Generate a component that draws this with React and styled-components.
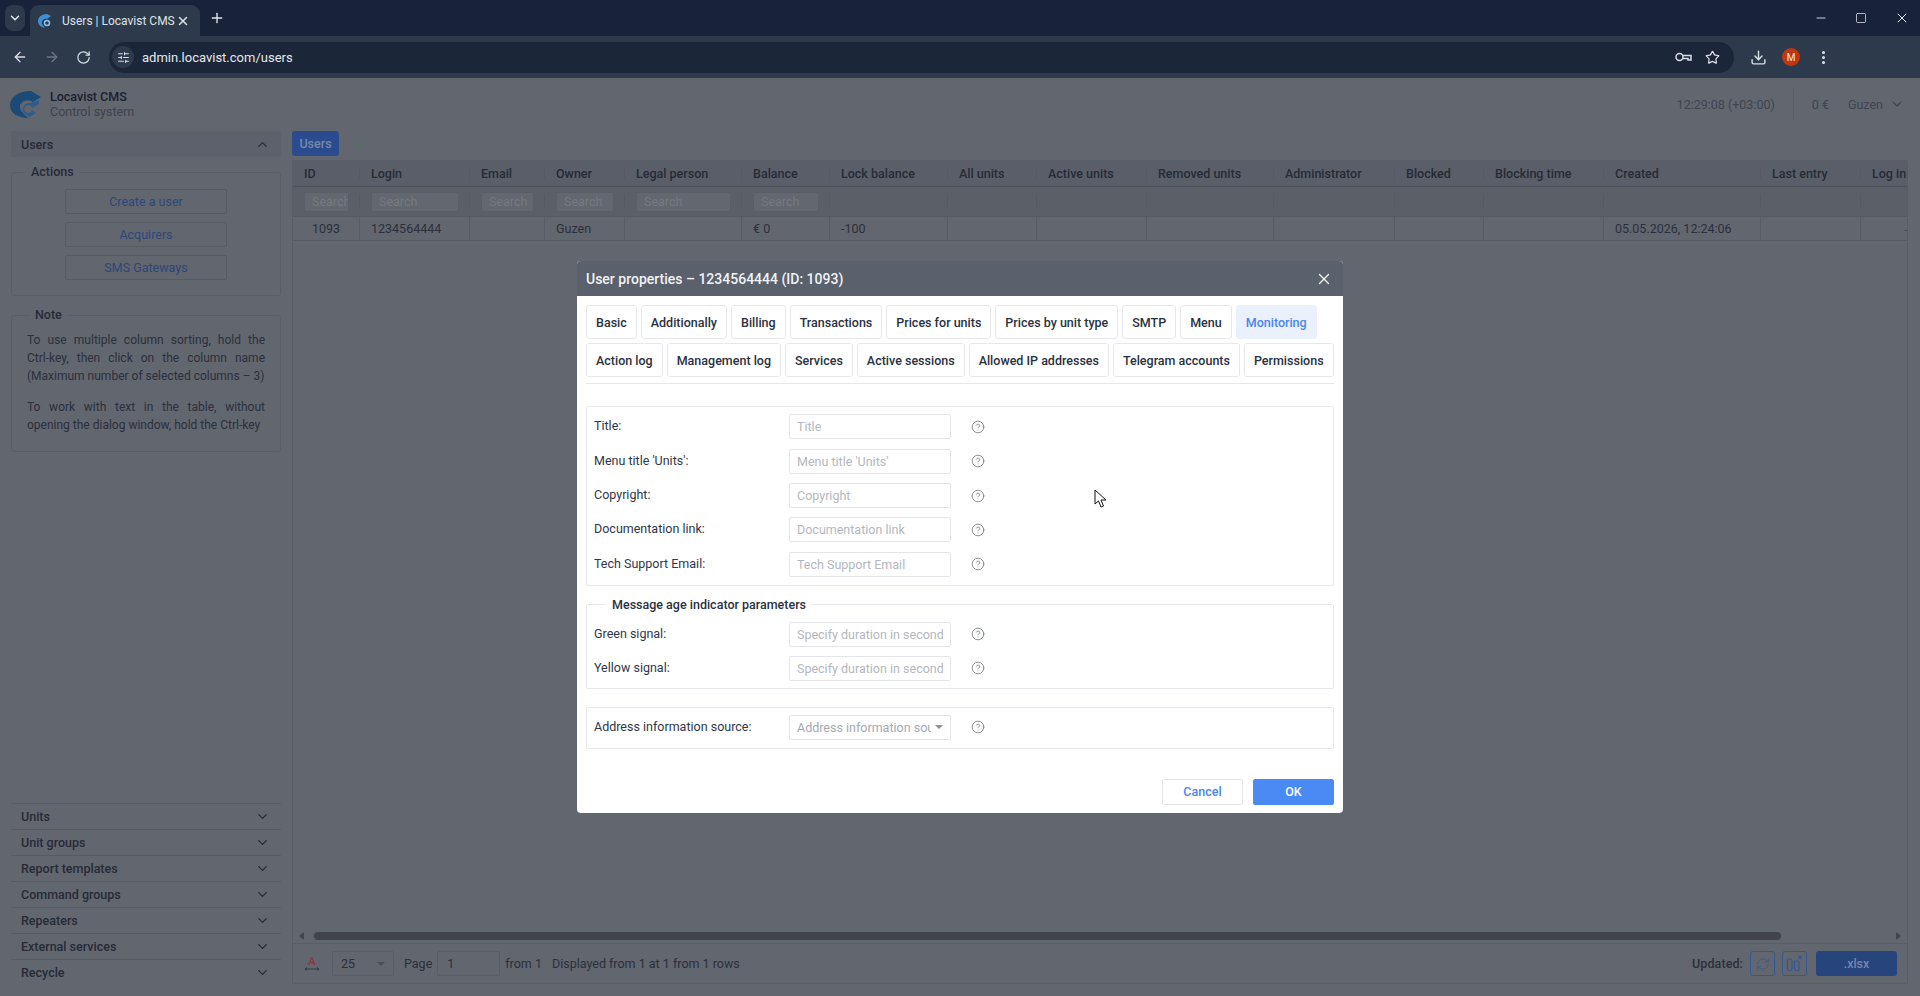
import styled, { createGlobalStyle } from "styled-components";
import {
  ArrowLeft,
  ArrowRight,
  ChevronDown,
  ChevronUp,
  CircleHelp,
  Download,
  EllipsisVertical,
  Minus,
  Plus,
  RefreshCw,
  RotateCw,
  SlidersHorizontal,
  Square,
  Star,
  X,
} from "lucide-react";

const GlobalStyle = createGlobalStyle`
  html, body {
    margin: 0;
    padding: 0;
    height: 996px;
    overflow: hidden;
    background: #62666f;
    font-family: Roboto, "Liberation Sans", sans-serif;
    font-size: 13px;
  }
  * { box-sizing: border-box; }
`;

const Window = styled.div`
  position: relative;
  display: flex;
  flex-direction: column;
  width: 1920px;
  height: 996px;
  overflow: hidden;
`;

/* browser chrome */
const TabStrip = styled.div`
  display: flex;
  align-items: flex-end;
  height: 36px;
  padding-left: 5px;
  background: #18233a;
  color: #e4e8ee;
`;
const TabSearch = styled.div`
  display: flex;
  align-items: center;
  justify-content: center;
  width: 20px;
  height: 26px;
  margin: 0 5px 5px 0;
  border-radius: 8px;
  background: #2d3a4c;
`;
const BrowserTab = styled.div`
  display: flex;
  align-items: center;
  width: 170px;
  height: 31px;
  padding: 0 10px 0 7px;
  border-radius: 9px 9px 0 0;
  background: #2d3a4c;
  font-size: 12px;
  color: #dde2e9;
`;
const TabTitle = styled.span`
  flex: 1;
  margin-left: 9px;
`;
const NewTab = styled.div`
  display: flex;
  align-items: center;
  margin: 0 0 9px 9px;
  height: 18px;
`;
const WindowControls = styled.div`
  display: flex;
  align-items: center;
  gap: 27px;
  margin-left: auto;
  height: 36px;
  padding-right: 10px;
`;
const Toolbar = styled.div`
  display: flex;
  align-items: center;
  height: 42px;
  padding: 0 10px 0 12px;
  background: #2d3a4c;
  color: #d8dde5;
`;
const NavIcons = styled.div`
  display: flex;
  align-items: center;
  gap: 16px;
  width: 98px;
`;
const AddressBar = styled.div`
  display: flex;
  align-items: center;
  width: 1625px;
  height: 31px;
  margin-left: -1px;
  padding: 0 14px 0 3px;
  border-radius: 16px;
  background: #1b2638;
`;
const SiteInfo = styled.div`
  display: flex;
  align-items: center;
  justify-content: center;
  width: 22px;
  height: 22px;
  border-radius: 50%;
  background: #2d3a4c;
`;
const Url = styled.span`
  flex: 1;
  margin-left: 8px;
  font-size: 13px;
  color: #e4e8ee;
`;
const AddressIcons = styled.div`
  display: flex;
  align-items: center;
  gap: 13px;
`;
const ToolIcons = styled.div`
  display: flex;
  align-items: center;
  gap: 15px;
  margin-left: 16px;
`;
const Avatar = styled.div`
  display: flex;
  align-items: center;
  justify-content: center;
  width: 18px;
  height: 18px;
  border-radius: 50%;
  background: #c2360f;
  color: #f4e6e0;
  font-size: 10px;
`;

/* dimmed page */
const Page = styled.div`
  display: flex;
  flex-direction: column;
  flex: 1;
  min-height: 0;
  background: #62666f;
  color: #2b303c;
`;
const Header = styled.div`
  display: flex;
  align-items: center;
  height: 52px;
  padding: 0 15px 0 10px;
`;
const Brand = styled.div`
  display: flex;
  flex-direction: column;
  margin-left: 9px;
  line-height: 15px;
`;
const BrandName = styled.span`
  font-size: 12.5px;
  font-weight: 500;
  color: #1c2030;
`;
const BrandSub = styled.span`
  font-size: 12.5px;
  color: #3d424e;
`;
const HeaderRight = styled.div`
  display: flex;
  align-items: center;
  margin-left: auto;
  font-size: 12.5px;
  color: #3f4551;
`;
const Clock = styled.span`
  padding-right: 18px;
`;
const HeaderDivider = styled.div`
  width: 1px;
  height: 31px;
  background: #5a5e68;
`;
const Balance = styled.span`
  margin: 0 19px 0 18px;
`;

const Content = styled.div`
  display: flex;
  flex: 1;
  min-height: 0;
  padding: 1px 12px 0 11px;
`;
const Sidebar = styled.div`
  display: flex;
  flex-direction: column;
  width: 270px;
  padding-bottom: 11px;
`;
const SectionHead = styled.div`
  display: flex;
  align-items: center;
  justify-content: space-between;
  height: 26px;
  padding: 0 11px 0 10px;
  background: #5d616b;
  font-weight: 500;
  font-size: 12.5px;
  color: #262b37;
`;
const Group = styled.fieldset`
  margin: ${(p) => p.$top}px 0 0;
  padding: ${(p) => p.$pad};
  min-width: 0;
  border: 1px solid #5a5e68;
  border-radius: 3px;
  display: flex;
  flex-direction: column;
`;
const GroupTitle = styled.legend`
  margin-left: 3px;
  padding: 0 5px;
  line-height: 16px;
  font-size: 12.5px;
  font-weight: 500;
  color: #262b37;
`;
const ActionButton = styled.div`
  display: flex;
  align-items: center;
  justify-content: center;
  width: 162px;
  height: 25px;
  margin: 0 auto 8px;
  border: 1px solid #575b65;
  border-radius: 2px;
  font-size: 12.5px;
  color: #2d4679;
  &:last-child { margin-bottom: 0; }
`;
const NoteText = styled.p`
  margin: 0 0 13px;
  line-height: 18px;
  font-size: 12px;
  text-align: justify;
  color: #2c303c;
  &:last-child { margin-bottom: 0; }
`;
const Accordion = styled.div`
  margin-top: auto;
`;
const AccordionItem = styled.div`
  display: flex;
  align-items: center;
  justify-content: space-between;
  height: 26px;
  padding: 0 11px 0 10px;
  border-top: 1px solid #575b65;
  font-size: 12.5px;
  font-weight: 500;
  color: #262b37;
`;

const Main = styled.div`
  display: flex;
  flex-direction: column;
  flex: 1;
  margin-left: 11px;
  padding-bottom: 12px;
  min-width: 0;
`;
const ViewTabs = styled.div`
  display: flex;
  align-items: center;
  gap: 13px;
  height: 25px;
  margin-bottom: 4px;
`;
const ViewTab = styled.div`
  display: flex;
  align-items: center;
  justify-content: center;
  width: 47px;
  height: 25px;
  border-radius: 3px;
  background: #2c4b8e;
  color: #7488ac;
  font-size: 12.5px;
  font-weight: 500;
`;
const TablePanel = styled.div`
  display: flex;
  flex-direction: column;
  flex: 1;
  border: 1px solid #595d67;
  border-radius: 2px;
  min-height: 0;
`;
const COLUMNS = "67px 110px 75px 80px 117px 88px 118px 89px 110px 127px 121px 89px 120px 157px 100px 46px";
const TableRow = styled.div`
  display: grid;
  grid-template-columns: ${COLUMNS};
  flex-shrink: 0;
  height: ${(p) => p.$height}px;
  background: ${(p) => p.$bg || "transparent"};
  border-bottom: 1px solid ${(p) => p.$line || "#565a64"};
`;
const HeadCell = styled.div`
  position: relative;
  display: flex;
  align-items: center;
  padding-left: 11px;
  font-size: 12.5px;
  font-weight: 500;
  color: #262b37;
  white-space: nowrap;
  overflow: hidden;
  &:not(:last-child)::after {
    content: "";
    position: absolute;
    right: 0;
    top: 7px;
    bottom: 6px;
    width: 1px;
    background: #565a64;
  }
`;
const SearchCell = styled(HeadCell)`
  padding: 0 11px;
  &:not(:last-child)::after { top: 7px; bottom: 7px; }
`;
const SearchInput = styled.div`
  display: flex;
  align-items: center;
  width: 100%;
  height: 20px;
  padding-left: 7px;
  background: #63676f;
  border: 1px solid #5a5e68;
  border-radius: 2px;
  color: #757982;
  font-size: 12.5px;
  font-weight: 400;
  overflow: hidden;
`;
const DataCell = styled.div`
  display: flex;
  align-items: center;
  justify-content: ${(p) => (p.$center ? "center" : "flex-start")};
  padding-left: ${(p) => (p.$center ? 0 : 11)}px;
  border-right: 1px solid #575b65;
  font-size: 12.5px;
  color: #2b303c;
  white-space: nowrap;
  overflow: hidden;
  &:last-child { border-right: 0; }
`;
const TableFill = styled.div`
  flex: 1;
`;
const ScrollRow = styled.div`
  display: flex;
  align-items: center;
  height: 16px;
  padding: 0 6px;
  border-bottom: 1px solid #595d67;
`;
const ScrollTrack = styled.div`
  flex: 1;
  padding: 0 115px 0 10px;
`;
const ScrollThumb = styled.div`
  height: 8px;
  border-radius: 4px;
  background: #41444d;
`;
const Arrow = styled.div`
  width: 0;
  height: 0;
  border-top: 4px solid transparent;
  border-bottom: 4px solid transparent;
  ${(p) => (p.$right ? "border-left: 5px solid #41444d;" : "border-right: 5px solid #41444d;")}
`;
const Footer = styled.div`
  display: flex;
  align-items: center;
  flex: 0 0 39px;
  padding: 0 10px 0 10px;
  font-size: 12.5px;
  color: #2b303c;
`;
const PageSize = styled.div`
  display: flex;
  align-items: center;
  justify-content: space-between;
  width: 62px;
  height: 25px;
  margin: 0 10px 0 11px;
  padding: 0 8px;
  border: 1px solid #595d67;
  border-radius: 2px;
`;
const Caret = styled.div`
  width: 0;
  height: 0;
  border-left: 4px solid transparent;
  border-right: 4px solid transparent;
  border-top: 4px solid ${(p) => p.$color || "#4a4e58"};
`;
const PageInput = styled.div`
  display: flex;
  align-items: center;
  width: 63px;
  height: 25px;
  margin: 0 5px 0 5px;
  padding-left: 9px;
  border: 1px solid #595d67;
  border-radius: 2px;
`;
const RowsInfo = styled.span`
  margin-left: 10px;
`;
const Updated = styled.span`
  margin: 0 7px 0 auto;
  font-weight: 500;
  letter-spacing: 0.1px;
`;
const OutlineButton = styled.div`
  display: flex;
  align-items: center;
  justify-content: center;
  width: 25px;
  height: 25px;
  margin-right: ${(p) => p.$gap}px;
  border: 1px solid #36568f;
  border-radius: 3px;
  color: #36568f;
`;
const ExportButton = styled.div`
  display: flex;
  align-items: center;
  justify-content: center;
  width: 81px;
  height: 25px;
  border-radius: 3px;
  background: #27447c;
  color: #7488ac;
  font-size: 12.5px;
  font-weight: 500;
`;

/* modal */
const Backdrop = styled.div`
  position: absolute;
  left: 0;
  right: 0;
  top: 78px;
  bottom: 0;
  display: flex;
  align-items: center;
  justify-content: center;
`;
const Modal = styled.div`
  width: 766px;
  border-radius: 4px;
  background: #fff;
  overflow: hidden;
  color: #333b4a;
`;
const ModalHead = styled.div`
  display: flex;
  align-items: center;
  justify-content: space-between;
  height: 35px;
  padding: 0 10px 0 9px;
  background: #5a606c;
  color: #f1f2f4;
  font-size: 14px;
  font-weight: 500;
`;
const ModalBody = styled.div`
  padding: 9px 9px 8px;
`;
const TabBar = styled.div`
  display: flex;
  flex-wrap: wrap;
  gap: 4px 4px;
  padding-bottom: 6px;
  border-bottom: 1px solid #e6e8eb;
`;
const PropTab = styled.div`
  display: flex;
  align-items: center;
  height: 34px;
  padding: 0 9px;
  border: 1px solid ${(p) => (p.$active ? "#eaf1fd" : "#e6e8eb")};
  border-radius: 3px;
  background: ${(p) => (p.$active ? "#eaf1fd" : "#fff")};
  color: ${(p) => (p.$active ? "#4a86f0" : "#2a3140")};
  font-size: 12.5px;
  font-weight: 500;
`;
const FormBox = styled.div`
  display: flex;
  flex-direction: column;
  gap: 9.3px;
  margin-top: 22px;
  padding: 7px 7px 8px;
  border: 1px solid #e6e8eb;
  border-radius: 2px;
`;
const FormGroup = styled.fieldset`
  display: flex;
  flex-direction: column;
  gap: 9px;
  min-width: 0;
  margin: 11px 0 0;
  padding: 9px 7px 7px;
  border: 1px solid #e6e8eb;
  border-radius: 2px;
`;
const FormLegend = styled.legend`
  margin-left: 12px;
  padding: 0 6px;
  line-height: 16px;
  font-size: 12.5px;
  font-weight: 500;
  color: #2a3140;
`;
const SingleBox = styled(FormBox)`
  margin-top: 18px;
`;
const FormRow = styled.div`
  display: flex;
  align-items: center;
  height: 25px;
`;
const FieldLabel = styled.label`
  width: 195px;
  margin-top: -2px;
  font-size: 12.5px;
  color: #2f3747;
`;
const FieldInput = styled.input`
  width: 162px;
  height: 25px;
  padding: 0 7px;
  border: 1px solid #e3e5e9;
  border-radius: 2px;
  font: 12.5px Roboto, sans-serif;
  outline: 0;
  &::placeholder { color: #b4b7bd; opacity: 1; }
`;
const FieldSelect = styled.div`
  display: flex;
  align-items: center;
  width: 162px;
  height: 25px;
  padding: 0 7px;
  border: 1px solid #e3e5e9;
  border-radius: 2px;
  font-size: 12.5px;
  color: #a6a9b0;
`;
const SelectText = styled.span`
  flex: 1;
  white-space: nowrap;
  overflow: hidden;
`;
const Help = styled.div`
  display: flex;
  margin-left: 20px;
  color: #6a7078;
`;
const ModalFooter = styled.div`
  display: flex;
  justify-content: flex-end;
  gap: 10px;
  margin-top: 30px;
`;
const ModalButton = styled.div`
  display: flex;
  align-items: center;
  justify-content: center;
  width: 81px;
  height: 26px;
  border: 1px solid ${(p) => (p.$primary ? "#4a8af5" : "#e3e5e9")};
  border-radius: 2px;
  background: ${(p) => (p.$primary ? "#4a8af5" : "#fff")};
  color: ${(p) => (p.$primary ? "#fff" : "#4a86f0")};
  font-size: 12.5px;
  font-weight: 500;
`;
const Cursor = styled.svg`
  position: absolute;
  left: 1094px;
  top: 489px;
`;

const columns = ["ID", "Login", "Email", "Owner", "Legal person", "Balance", "Lock balance", "All units", "Active units", "Removed units", "Administrator", "Blocked", "Blocking time", "Created", "Last entry", "Log in"];
const searchable = 6;
const row = { 0: "1093", 1: "1234564444", 3: "Guzen", 5: "€ 0", 6: "-100", 13: "05.05.2026, 12:24:06" };
const menuItems = ["Units", "Unit groups", "Report templates", "Command groups", "Repeaters", "External services", "Recycle"];
const propTabs = ["Basic", "Additionally", "Billing", "Transactions", "Prices for units", "Prices by unit type", "SMTP", "Menu", "Monitoring", "Action log", "Management log", "Services", "Active sessions", "Allowed IP addresses", "Telegram accounts", "Permissions"];
const mainFields = [
  ["Title:", "Title"],
  ["Menu title 'Units':", "Menu title 'Units'"],
  ["Copyright:", "Copyright"],
  ["Documentation link:", "Documentation link"],
  ["Tech Support Email:", "Tech Support Email"],
];
const signalFields = ["Green signal:", "Yellow signal:"];

const Logo = () => (
  <svg width="31" height="27" viewBox="0 0 31 27">
    <path d="M21 0 L31 6 L23 11 A9 9 0 0 0 10 14 A9 9 0 0 0 13 22 L18 27 C8 27 0 22 0 14 C0 6 9 0 21 0 Z" fill="#1c4a76" />
    <path d="M29 9 L29 13 L22 17 A4 4 0 1 0 22 19 L26 22 L19 26 L13 21 A7 7 0 0 1 21 12 Z" fill="#2c5d8c" />
  </svg>
);

const TabFavicon = () => (
  <svg width="16" height="16" viewBox="0 0 16 16">
    <path d="M10 1 L14 3 L10 6 A4 4 0 0 0 5 11 L8 15 C3 14 1 11 1 8 C1 4 5 1 10 1 Z" fill="#3d8fd8" />
    <circle cx="10" cy="10" r="2.5" fill="none" stroke="#8fc3ec" strokeWidth="1.5" />
  </svg>
);

const KeyIcon = () => (
  <svg width="17" height="12" viewBox="0 0 17 12" fill="none" stroke="currentColor" strokeWidth="1.5">
    <circle cx="4.5" cy="6" r="3.5" />
    <path d="M8 4.5 H16 V9 H13 V7.5 H8" />
  </svg>
);

const FitWidthIcon = () => (
  <svg width="18" height="18" viewBox="0 0 18 18">
    <text x="9" y="10" textAnchor="middle" fontSize="11" fontFamily="Roboto, sans-serif" fontWeight="500" fill="#8a3540">A</text>
    <path d="M2 14 H16 M2 14 L4 12.5 M2 14 L4 15.5 M16 14 L14 12.5 M16 14 L14 15.5" stroke="#30384a" strokeWidth="1" fill="none" />
  </svg>
);

const ColumnsIcon = () => (
  <svg width="17" height="17" viewBox="0 0 17 17" fill="none" stroke="currentColor" strokeWidth="1.2">
    <rect x="1.5" y="4" width="4.5" height="11.5" rx="1.5" />
    <rect x="8.5" y="6" width="4.5" height="9.5" rx="1.5" />
    <path d="M12.5 1 L15.5 4 M15.5 1 L12.5 4" />
  </svg>
);

const HelpIcon = () => (
  <Help>
    <CircleHelp size={14} strokeWidth={1.3} />
  </Help>
);

const App = () => {
  return (
    <Window>
      <GlobalStyle />
      <TabStrip>
        <TabSearch>
          <ChevronDown size={14} strokeWidth={2.5} />
        </TabSearch>
        <BrowserTab>
          <TabFavicon />
          <TabTitle>Users | Locavist CMS</TabTitle>
          <X size={14} strokeWidth={2.5} />
        </BrowserTab>
        <NewTab>
          <Plus size={16} strokeWidth={2} />
        </NewTab>
        <WindowControls>
          <Minus size={14} strokeWidth={1.5} />
          <Square size={12} strokeWidth={1.5} />
          <X size={16} strokeWidth={1.5} />
        </WindowControls>
      </TabStrip>
      <Toolbar>
        <NavIcons>
          <ArrowLeft size={16} strokeWidth={2} />
          <ArrowRight size={16} strokeWidth={2} color="#6c7685" />
          <RotateCw size={15} strokeWidth={2} />
        </NavIcons>
        <AddressBar>
          <SiteInfo>
            <SlidersHorizontal size={13} strokeWidth={2} />
          </SiteInfo>
          <Url>admin.locavist.com/users</Url>
          <AddressIcons>
            <KeyIcon />
            <Star size={15} strokeWidth={2} />
          </AddressIcons>
        </AddressBar>
        <ToolIcons>
          <Download size={17} strokeWidth={2} />
          <Avatar>M</Avatar>
          <EllipsisVertical size={17} strokeWidth={2.4} />
        </ToolIcons>
      </Toolbar>

      <Page>
        <Header>
          <Logo />
          <Brand>
            <BrandName>Locavist CMS</BrandName>
            <BrandSub>Control system</BrandSub>
          </Brand>
          <HeaderRight>
            <Clock>12:29:08 (+03:00)</Clock>
            <HeaderDivider />
            <Balance>0 €</Balance>
            Guzen
            <ChevronDown size={16} strokeWidth={1.6} style={{ marginLeft: 6 }} />
          </HeaderRight>
        </Header>

        <Content>
          <Sidebar>
            <SectionHead>
              Users
              <ChevronUp size={15} strokeWidth={2} />
            </SectionHead>
            <Group $top={7} $pad="9px 0 15px">
              <GroupTitle style={{ marginLeft: 14 }}>Actions</GroupTitle>
              <ActionButton>Create a user</ActionButton>
              <ActionButton>Acquirers</ActionButton>
              <ActionButton>SMS Gateways</ActionButton>
            </Group>
            <Group $top={11} $pad="8px 15px 17px">
              <GroupTitle>Note</GroupTitle>
              <NoteText>To use multiple column sorting, hold the Ctrl-key, then click on the column name (Maximum number of selected columns – 3)</NoteText>
              <NoteText>To work with text in the table, without opening the dialog window, hold the Ctrl-key</NoteText>
            </Group>
            <Accordion>
              {menuItems.map((item) => (
                <AccordionItem key={item}>
                  {item}
                  <ChevronDown size={15} strokeWidth={2} />
                </AccordionItem>
              ))}
            </Accordion>
          </Sidebar>

          <Main>
            <ViewTabs>
              <ViewTab>Users</ViewTab>
              <Plus size={15} strokeWidth={2} color="#2f8a3c" />
            </ViewTabs>
            <TablePanel>
              <TableRow $height={26} $bg="#5a5e68" $line="#4c505a">
                {columns.map((c) => (
                  <HeadCell key={c}>{c}</HeadCell>
                ))}
              </TableRow>
              <TableRow $height={30} $bg="#5b5f68">
                {columns.map((c, i) => (
                  <SearchCell key={c}>{i < searchable && <SearchInput>Search</SearchInput>}</SearchCell>
                ))}
              </TableRow>
              <TableRow $height={24}>
                {columns.map((c, i) => (
                  <DataCell key={c} $center={i === 0}>
                    {row[i]}
                    {i === columns.length - 1 && <span style={{ marginLeft: 30 }}>→</span>}
                  </DataCell>
                ))}
              </TableRow>
              <TableFill />
              <ScrollRow>
                <Arrow />
                <ScrollTrack>
                  <ScrollThumb />
                </ScrollTrack>
                <Arrow $right />
              </ScrollRow>
              <Footer>
                <FitWidthIcon />
                <PageSize>
                  25
                  <Caret />
                </PageSize>
                Page
                <PageInput>1</PageInput>
                from 1
                <RowsInfo>Displayed from 1 at 1 from 1 rows</RowsInfo>
                <Updated>Updated:</Updated>
                <OutlineButton $gap={7}>
                  <RefreshCw size={14} strokeWidth={1.3} />
                </OutlineButton>
                <OutlineButton $gap={9}>
                  <ColumnsIcon />
                </OutlineButton>
                <ExportButton>.xlsx</ExportButton>
              </Footer>
            </TablePanel>
          </Main>
        </Content>
      </Page>

      <Backdrop>
        <Modal>
          <ModalHead>
            User properties – 1234564444 (ID: 1093)
            <X size={18} strokeWidth={1.8} />
          </ModalHead>
          <ModalBody>
            <TabBar>
              {propTabs.map((t) => (
                <PropTab key={t} $active={t === "Monitoring"}>
                  {t}
                </PropTab>
              ))}
            </TabBar>
            <FormBox>
              {mainFields.map(([label, hint]) => (
                <FormRow key={label}>
                  <FieldLabel>{label}</FieldLabel>
                  <FieldInput placeholder={hint} readOnly />
                  <HelpIcon />
                </FormRow>
              ))}
            </FormBox>
            <FormGroup>
              <FormLegend>Message age indicator parameters</FormLegend>
              {signalFields.map((label) => (
                <FormRow key={label}>
                  <FieldLabel>{label}</FieldLabel>
                  <FieldInput placeholder="Specify duration in seconds" readOnly />
                  <HelpIcon />
                </FormRow>
              ))}
            </FormGroup>
            <SingleBox>
              <FormRow>
                <FieldLabel>Address information source:</FieldLabel>
                <FieldSelect>
                  <SelectText>Address information source</SelectText>
                  <Caret $color="#8d9097" style={{ marginLeft: 4 }} />
                </FieldSelect>
                <HelpIcon />
              </FormRow>
            </SingleBox>
            <ModalFooter>
              <ModalButton>Cancel</ModalButton>
              <ModalButton $primary>OK</ModalButton>
            </ModalFooter>
          </ModalBody>
        </Modal>
      </Backdrop>

      <Cursor width="13" height="19" viewBox="0 0 13 19">
        <path d="M1 1 L1 15 L4.5 12 L7 18 L9.5 17 L7 11 L12 11 Z" fill="#fff" stroke="#111" strokeWidth="1" />
      </Cursor>
    </Window>
  );
};

export default App;
